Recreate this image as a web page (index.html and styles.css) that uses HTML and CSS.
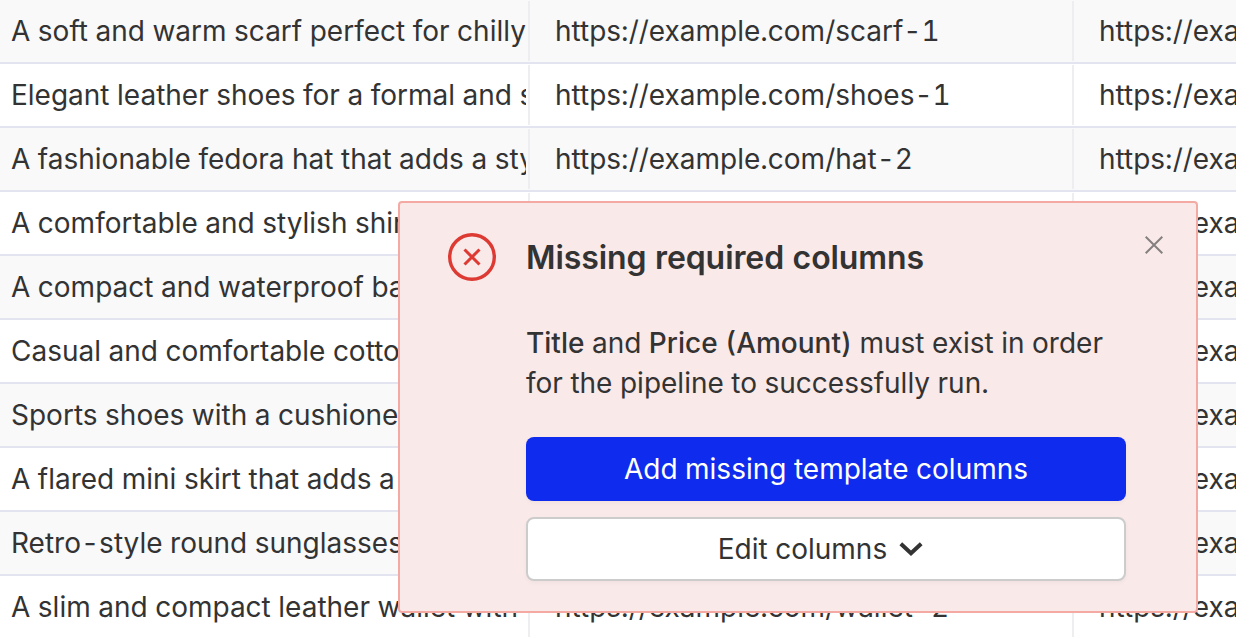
FILE: index.html
```html
<!DOCTYPE html>
<html lang="en">
<head>
<meta charset="utf-8">
<title>Missing required columns</title>
<link rel="stylesheet" href="styles.css">
</head>
<body>
<main class="table">
  <div class="row"><div class="cell"><div class="clip">A soft and warm scarf perfect for chilly days and cozy evenings</div></div><div class="cell"><div class="clip">https://example.com/scarf-1</div></div><div class="cell"><div class="clip">https://example.com/scarf-2</div></div></div>
  <div class="row"><div class="cell"><div class="clip">Elegant leather shoes for a formal and sophisticated look</div></div><div class="cell"><div class="clip">https://example.com/shoes-1</div></div><div class="cell"><div class="clip">https://example.com/shoes-2</div></div></div>
  <div class="row"><div class="cell"><div class="clip">A fashionable fedora hat that adds a stylish touch</div></div><div class="cell"><div class="clip">https://example.com/hat-2</div></div><div class="cell"><div class="clip">https://example.com/hat-3</div></div></div>
  <div class="row"><div class="cell"><div class="clip">A comfortable and stylish shirt for everyday wear</div></div><div class="cell"><div class="clip">https://example.com/shirt-1</div></div><div class="cell"><div class="clip">https://example.com/shirt-2</div></div></div>
  <div class="row"><div class="cell"><div class="clip">A compact and waterproof backpack for travel</div></div><div class="cell"><div class="clip">https://example.com/bag-1</div></div><div class="cell"><div class="clip">https://example.com/bag-2</div></div></div>
  <div class="row"><div class="cell"><div class="clip">Casual and comfortable cotton pants for the weekend</div></div><div class="cell"><div class="clip">https://example.com/pants-1</div></div><div class="cell"><div class="clip">https://example.com/pants-2</div></div></div>
  <div class="row"><div class="cell"><div class="clip">Sports shoes with a cushioned sole for running</div></div><div class="cell"><div class="clip">https://example.com/sneakers-1</div></div><div class="cell"><div class="clip">https://example.com/sneakers-2</div></div></div>
  <div class="row"><div class="cell"><div class="clip">A flared mini skirt that adds a playful touch</div></div><div class="cell"><div class="clip">https://example.com/skirt-1</div></div><div class="cell"><div class="clip">https://example.com/skirt-2</div></div></div>
  <div class="row"><div class="cell"><div class="clip">Retro-style round sunglasses with a classic frame</div></div><div class="cell"><div class="clip">https://example.com/glasses-1</div></div><div class="cell"><div class="clip">https://example.com/glasses-2</div></div></div>
  <div class="row"><div class="cell"><div class="clip">A slim and compact leather wallet with card slots</div></div><div class="cell"><div class="clip">https://example.com/wallet-2</div></div><div class="cell"><div class="clip">https://example.com/wallet-3</div></div></div>
</main>
<section class="alert" role="alert">
  <svg class="alert-icon" viewBox="0 0 48 48" aria-hidden="true"><circle cx="24" cy="24" r="22.3" fill="none" stroke="#dc3a33" stroke-width="3.4"/><path d="M16.5 16.5 31.5 31.5M31.5 16.5 16.5 31.5" fill="none" stroke="#dc3a33" stroke-width="3"/></svg>
  <div class="alert-body">
    <h1 class="alert-title">Missing required columns</h1>
    <p class="alert-text"><strong>Title</strong> and <strong>Price (Amount)</strong> must exist in order for the pipeline to successfully run.</p>
    <button class="btn btn-primary" type="button">Add missing template columns</button>
    <button class="btn btn-secondary" type="button">Edit columns
      <svg class="chevron" viewBox="0 0 24 14" aria-hidden="true"><path d="M1.8 1.8 12 11.2 22.2 1.8" fill="none" stroke="#333" stroke-width="4"/></svg>
    </button>
  </div>
  <button class="close" type="button" aria-label="Close"><svg viewBox="0 0 18 18" aria-hidden="true"><path d="M.7.7 17.3 17.3M17.3.7.7 17.3" fill="none" stroke="#848080" stroke-width="2"/></svg></button>
</section>
</body>
</html>
```

FILE: styles.css
```css
* { box-sizing: border-box; }
html, body { margin: 0; height: 100%; overflow: hidden; }
body {
  font-family: Inter, "Liberation Sans", sans-serif;
  font-variant-numeric: tabular-nums;
  color: #333;
  background: #fff;
  position: relative;
}

.table { display: flex; flex-direction: column; }
.row {
  display: grid;
  grid-template-columns: 530px 544px 544px;
  height: 64px;
  border-bottom: 2px solid #e2e4f0;
}
.row:nth-child(odd) { background: #f9f9fa; }
.cell {
  font-size: 28px;
  line-height: 62px;
  padding: 0 4px 0 11px;
  position: relative;
  min-width: 0;
}
.cell:nth-child(n+2) { padding-left: 25px; }
.cell::after {
  content: "";
  position: absolute;
  top: 1px;
  bottom: 1px;
  right: 0;
  width: 2px;
  background: #eeeef0;
}
.clip { white-space: nowrap; overflow: hidden; }

.alert {
  position: absolute;
  left: 398px;
  top: 201px;
  width: 800px;
  height: 412px;
  padding: 30px 70px 30px 48px;
  display: flex;
  gap: 30px;
  background: #fae9e9;
  border: 2px solid #f4a9a3;
  border-radius: 4px;
}
.alert-icon { width: 48px; height: 48px; flex: none; }
.alert-body { flex: 1; display: flex; flex-direction: column; }
.alert-title { margin: 0 0 40px; font-size: 32px; line-height: 50px; font-weight: 600; letter-spacing: -0.08px; }
.alert-text { margin: 0 0 34px; font-size: 28px; line-height: 40px; }
.alert-text strong { font-weight: 500; }
.btn {
  font: inherit;
  font-size: 28px;
  height: 64px;
  border-radius: 8px;
  display: flex;
  align-items: center;
  justify-content: center;
  gap: 12px;
  color: #333;
}
.btn-primary { background: #0f2bed; color: #fff; border: 0; margin-bottom: 16px; box-shadow: 0 2px 4px rgba(0,0,0,.04); }
.btn-secondary { background: #fff; border: 2px solid #ccc; box-shadow: 0 2px 4px rgba(0,0,0,.04); }
.chevron { width: 24px; height: 14px; margin-right: 11px; }
.close {
  position: absolute;
  top: 33px;
  right: 33px;
  width: 18px;
  height: 18px;
  padding: 0;
  border: 0;
  background: none;
  display: block;
}
.close svg { display: block; width: 18px; height: 18px; }
```
